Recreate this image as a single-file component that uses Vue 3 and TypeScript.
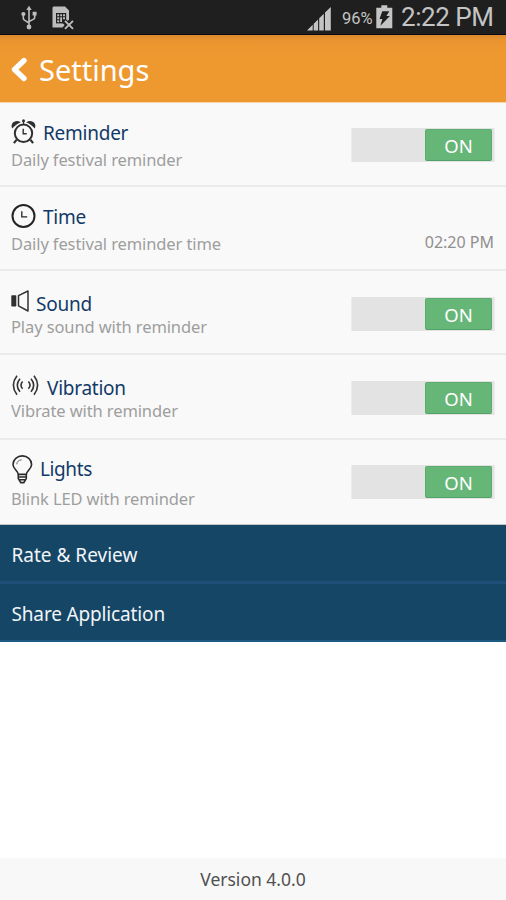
<script setup lang="ts">
import { ref } from 'vue'

interface Setting {
  id: string
  title: string
  description: string
  toggle: boolean
}

const settings: Setting[] = [
  { id: 'reminder', title: 'Reminder', description: 'Daily festival reminder', toggle: true },
  { id: 'time', title: 'Time', description: 'Daily festival reminder time', toggle: false },
  { id: 'sound', title: 'Sound', description: 'Play sound with reminder', toggle: true },
  { id: 'vibration', title: 'Vibration', description: 'Vibrate with reminder', toggle: true },
  { id: 'lights', title: 'Lights', description: 'Blink LED with reminder', toggle: true },
]

const enabled = ref<Record<string, boolean>>({ reminder: true, sound: true, vibration: true, lights: true })

function flip(id: string) {
  enabled.value[id] = !enabled.value[id]
}
</script>

<template>
  <div class="screen">
    <div class="status">
      <svg class="usb" width="16" height="26" viewBox="0 0 16 26" fill="none" stroke="#bdbdbd" stroke-width="1.6">
        <path d="M8 4v17M2.3 10v3.2q0 1.4 1.5 2.2L8 18M13.7 9v3.2q0 1.4-1.5 2.2L8 16.5" />
        <path d="M8 0.8 10.7 5H5.3zM11.6 6.8h4v3.6h-4z" fill="#bdbdbd" stroke="none" />
        <circle cx="2.4" cy="9" r="2.1" fill="#bdbdbd" stroke="none" />
        <circle cx="8" cy="22" r="2.4" fill="#bdbdbd" stroke="none" />
      </svg>
      <svg class="sim" width="22" height="24" viewBox="0 0 22 24">
        <path d="M1.5 0.5H13L17 4.5v9.2l-2.8 2.6-2-1.8-2 2 2.4 2.6-2 2.4H0.5v-20z" fill="#bdbdbd" />
        <path d="M4 7h10.200v10.400H4z" fill="#202020" />
        <path d="M5.200 8.300h2v2h-2zM8.200 8.300h1.800v2H8.200zM11 8.300h2v2h-2zM5.200 11.300h2v2h-2zM8.200 11.300h1.800v4.800H8.200zM11 11.300h2v2h-2zM5.200 14.200h2v2h-2z" fill="#bdbdbd" />
        <path d="m13 14.800 8 8m0-8-8 8" stroke="#1f1f1f" stroke-width="4" />
        <path d="m13 14.800 8 8m0-8-8 8" stroke="#bdbdbd" stroke-width="1.9" />
      </svg>
      <span class="fill"></span>
      <svg class="signal" width="24" height="24" viewBox="0 0 24 24" fill="#c4c4c4">
        <path d="M0 23.500 5.700 17.800v5.700zM6.700 16.800l4.400-4.400v11.100H6.700zM12.200 11.300l4.600-4.600v16.800h-4.600zM18 5.500 23.800 0v23.500H18z" />
      </svg>
      <span class="percent">96%</span>
      <svg class="battery" width="17" height="24" viewBox="0 0 17 24">
        <path d="M0.300 2.800h5V0.300h6v2.500h5V23.300h-16z" fill="#c4c4c4" />
        <path d="M6.300 6.300h7L10.400 11h3.500L4.400 20.800l2-6.700H3.500z" fill="#1f1f1f" />
      </svg>
      <span class="clock">2:22 PM</span>
    </div>

    <header class="bar">
      <svg width="16" height="26" viewBox="0 0 16 26" fill="none" stroke="#fff" stroke-width="5.4" stroke-linecap="round" stroke-linejoin="round">
        <path d="M13 3.500 3.500 12.500l9.500 9" />
      </svg>
      <h1>Settings</h1>
    </header>

    <section>
      <div v-for="item in settings" :key="item.id" class="row" :class="item.id">
        <div class="info">
          <div class="title">
            <svg v-if="item.id === 'reminder'" class="icon" width="25" height="25" viewBox="0 0 25 25" fill="none" stroke="#303030">
              <circle cx="12.5" cy="14.3" r="8.7" stroke-width="2" />
              <path d="M12.200 9.800v5h3.500" stroke-width="1.4" />
              <path d="M12.500 1.500v4" stroke-width="1.3" />
              <circle cx="12.5" cy="1.8" r="1.5" fill="#303030" stroke="none" />
              <path d="M1.200 9.600C-1.300 4.500 4.300-.2 9.800 3.200 6.300 4.500 3.400 6.800 1.200 9.600zM23.800 9.600C26.300 4.500 20.700-.2 15.200 3.200 18.700 4.500 21.600 6.800 23.800 9.600z" fill="#303030" stroke="none" />
              <path d="m5.500 20.800-2.600 3.400M19.500 20.800l2.600 3.400" stroke-width="2.2" />
            </svg>
            <svg v-else-if="item.id === 'time'" class="icon" width="25" height="25" viewBox="0 0 25 25" fill="none" stroke="#252525">
              <circle cx="12.5" cy="12" r="11" stroke-width="2" />
              <path d="M10.800 7.300v5.500h5.400" stroke-width="1.3" />
            </svg>
            <svg v-else-if="item.id === 'sound'" class="icon" width="18" height="22" viewBox="0 0 18 22">
              <rect x="0.3" y="5.3" width="5" height="11.2" rx="0.8" fill="#303030" />
              <path d="M7.500 5.700 17 1v20L7.500 15.800z" fill="none" stroke="#333" stroke-width="1.5" stroke-linejoin="round" />
            </svg>
            <svg v-else-if="item.id === 'vibration'" class="icon" width="27" height="21" viewBox="0 0 27 21" fill="none" stroke="#333" stroke-width="1.6">
              <path d="M5 0.800Q-2.300 10.300 5 19.800M8 3.700Q2.500 10.300 8 16.700M10.600 6.500Q7.300 10.200 10.600 13.800" />
              <path d="M22 0.800Q29.300 10.300 22 19.800M19 3.700Q24.500 10.300 19 16.700M16.400 6.500Q19.700 10.200 16.400 13.800" />
            </svg>
            <svg v-else class="icon" width="21" height="29" viewBox="0 0 21 29" fill="none" stroke="#2b2b2b" stroke-width="1.6">
              <path d="M6.300 19.400C6 15.500 1 14 1 9.400 1 4.500 5.300 0.900 10.300 0.900s9.300 3.600 9.300 8.500c0 4.600-5 6.100-5.300 10z" />
              <path d="M6.300 19.400v4.200l2.500 4h3l2.500-4v-4.200M6.300 22h8M6.500 24.700h7.600" />
              <path d="M4.800 9.300Q5 5.300 9.700 4.800" stroke="#666" stroke-width="1" />
            </svg>
            <span>{{ item.title }}</span>
          </div>
          <div class="description">{{ item.description }}</div>
        </div>
        <button v-if="item.toggle" class="toggle" :class="{ off: !enabled[item.id] }" @click="flip(item.id)">
          <span class="thumb">{{ enabled[item.id] ? 'ON' : 'OFF' }}</span>
        </button>
        <span v-else class="value">02:20 PM</span>
      </div>
    </section>

    <nav>
      <a class="rate"><span>Rate &amp; Review</span></a>
      <a class="share"><span>Share Application</span></a>
    </nav>

    <footer><span>Version 4.0.0</span></footer>
  </div>
</template>

<style>
body {
  margin: 0;
  background: #fff;
}
</style>

<style scoped>
.screen {
  width: 506px;
  height: 900px;
  display: flex;
  flex-direction: column;
  overflow: hidden;
  background: #fff;
  font-family: "Noto Sans", "Open Sans", sans-serif;
}
svg {
  display: block;
  flex: none;
  overflow: visible;
}
.status {
  height: 35px;
  flex: none;
  box-sizing: border-box;
  display: flex;
  align-items: flex-start;
  padding: 0 12px 0 21px;
  background: #1f1f1f;
  border-bottom: 1px solid #080b18;
  color: #c4c4c4;
  font-family: Roboto, sans-serif;
  white-space: nowrap;
}
.usb { margin-top: 5px; }
.sim { margin: 6px 0 0 15px; }
.fill { flex: 1; }
.signal { margin-top: 7px; }
.percent {
  margin: 7px 0 0 11px;
  width: 34px;
  font-size: 16.5px;
  line-height: 23px;
}
.battery { margin-top: 5px; }
.clock {
  width: 93px;
  margin-left: 8px;
  font-size: 26px;
  letter-spacing: -0.45px;
  line-height: 35px;
}
.bar {
  height: 68px;
  flex: none;
  box-sizing: border-box;
  display: flex;
  align-items: flex-start;
  padding: 22px 0 0 11px;
  background: linear-gradient(#d98a2d 0, #e8932f 4px, #ee9830 16px);
  border-bottom: 1px solid #f8d5a8;
}
h1 {
  margin: -7px 0 0 12px;
  color: #fff;
  font-size: 29px;
  font-weight: 400;
  line-height: 40px;
}
section {
  flex: none;
}
.row {
  box-sizing: border-box;
  height: 84px;
  display: flex;
  align-items: flex-start;
  justify-content: space-between;
  padding: 0 12px 0 11px;
  background: #f9f9f9;
  border-bottom: 2px solid #ebebeb;
  white-space: nowrap;
}
.vibration, .lights { height: 85px; }
.lights { border-bottom: 1px solid #c5c5c5; }
.title {
  display: flex;
  align-items: flex-start;
  height: 24px;
  color: #123a68;
  font-size: 19px;
  letter-spacing: -0.25px;
  line-height: 24px;
}
.description {
  color: #9e9e9e;
  font-size: 16.5px;
  letter-spacing: -0.11px;
  line-height: 20px;
}
.reminder .info { padding-top: 17px; }
.reminder .icon { margin: -1px 7px 0 0; }
.reminder .title, .sound .title { line-height: 26px; }
.reminder .description { margin-top: 6px; }
.time .info { padding-top: 18px; }
.time .icon { margin: -1px 7px 0 0; }
.time .description { margin-top: 5px; }
.sound .info { padding-top: 20px; }
.sound .icon { margin: -1px 7px 0 0; }
.sound .description { margin-top: 2px; }
.vibration .info { padding-top: 21px; }
.vibration .icon { margin: -1px 8px 0 1px; }
.vibration .description { margin-top: 1px; }
.lights .info { padding-top: 17px; }
.lights .icon { margin: -2px 7px 0 1px; }
.lights .title { letter-spacing: -0.4px; }
.lights .description { margin-top: 8px; }
.value {
  margin-top: 45px;
  color: #8f8f8f;
  font-size: 16px;
  line-height: 20px;
}
.toggle {
  box-sizing: border-box;
  width: 144px;
  height: 34px;
  display: flex;
  justify-content: flex-end;
  margin: 25px -1px 0 0;
  padding: 1px 2px 2px;
  border: 1px solid #ececec;
  border-width: 0 1px;
  background: #e3e3e3;
  font-family: inherit;
}
.toggle.off { justify-content: flex-start; }
.sound .toggle, .vibration .toggle { margin-top: 26px; }
.thumb {
  box-sizing: border-box;
  width: 67px;
  height: 32px;
  border: 1px solid #5cac6e;
  border-bottom-color: #50a265;
  border-radius: 2px;
  background: #66b678;
  color: #fff;
  font-size: 18.5px;
  line-height: 32px;
  text-align: center;
}
nav {
  flex: none;
  color: #f2f5f8;
  font-size: 19px;
  letter-spacing: -0.15px;
}
nav a {
  box-sizing: border-box;
  display: flex;
  height: 59px;
  padding: 18px 0 0 11.5px;
  line-height: 25px;
  background: #164666;
  border-bottom: 3px solid #1f4f78;
}
nav .rate { letter-spacing: 0; }
nav .share {
  height: 58px;
  border-bottom: 2px solid #1d5b83;
}
footer {
  flex: none;
  height: 42px;
  margin-top: auto;
  display: flex;
  justify-content: center;
  background: #f8f8f8;
  color: #505050;
  font-size: 17.5px;
  line-height: 43px;
}
</style>
